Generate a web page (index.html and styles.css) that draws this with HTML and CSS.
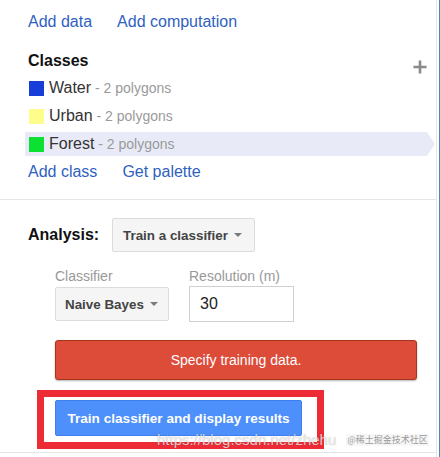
FILE: index.html
```html
<!DOCTYPE html>
<html>
<head>
<meta charset="utf-8">
<link rel="stylesheet" href="styles.css">
</head>
<body>
<div class="page">
  <div class="panel">
    <section class="sec-classes">
      <div class="links">
        <a class="link">Add data</a>
        <a class="link">Add computation</a>
      </div>
      <div class="heading-row">
        <h2 class="heading">Classes</h2>
        <svg class="plus" width="14" height="14" viewBox="0 0 14 14"><path d="M7 0.5V13.5M0.5 7H13.5" stroke="#8a8a8a" stroke-width="2.6" fill="none"/></svg>
      </div>
      <ul class="class-list">
        <li class="class-row"><span class="swatch water"></span><span class="cname">Water</span><span class="cmeta">&nbsp;- 2 polygons</span></li>
        <li class="class-row"><span class="swatch urban"></span><span class="cname">Urban</span><span class="cmeta">&nbsp;- 2 polygons</span></li>
        <li class="class-row selected"><span class="swatch forest"></span><span class="cname">Forest</span><span class="cmeta">&nbsp;- 2 polygons</span></li>
      </ul>
      <div class="links links-bottom">
        <a class="link">Add class</a>
        <a class="link">Get palette</a>
      </div>
    </section>
    <section class="sec-analysis">
      <div class="analysis-row">
        <span class="analysis-label">Analysis:</span>
        <button class="dropdown dd-analysis">Train a classifier<span class="caret"></span></button>
      </div>
      <div class="params">
        <div class="param p-classifier">
          <label class="plabel">Classifier</label>
          <button class="dropdown dd-classifier">Naive Bayes<span class="caret"></span></button>
        </div>
        <div class="param p-res">
          <label class="plabel">Resolution (m)</label>
          <div class="input">30</div>
        </div>
      </div>
      <div class="error">Specify training data.</div>
      <div class="highlight-box">
        <button class="primary">Train classifier and display results</button>
      </div>
    </section>
  </div>
  <div class="edge"></div>
</div>
<div class="watermark"><span class="wm-url">https://blog.csdn.net/zhehu</span><span class="wm-badge">@稀土掘金技术社区</span></div>
</body>
</html>
```
FILE: styles.css
```css
html, body {
  margin: 0;
  padding: 0;
  background: #fff;
}
body {
  width: 440px;
  height: 457px;
  overflow: hidden;
  position: relative;
  font-family: "Liberation Sans", Arial, sans-serif;
  color: #222;
}
.page {
  display: flex;
  height: 457px;
}
.panel {
  width: 436px;
  border-right: 1px solid #e6e6e6;
}
.edge {
  width: 1px;
  margin-left: 2px;
  background: #4a86c8;
}
.sec-classes {
  padding: 13px 9px 18px 28px;
  border-bottom: 1px solid #e5e5e5;
}
.links {
  display: flex;
  gap: 25px;
  font-size: 16px;
  line-height: 18px;
  white-space: nowrap;
}
.link {
  color: #2f5fc2;
  cursor: pointer;
}
.heading-row {
  display: flex;
  justify-content: space-between;
  align-items: flex-start;
  height: 18px;
  margin-top: 21px;
}
.heading {
  margin: 0;
  font-size: 16px;
  line-height: 18px;
  font-weight: bold;
  color: #111;
}
.plus {
  margin-top: 8px;
  flex: none;
}
.class-list {
  list-style: none;
  margin: 6px -8px 0 -3px;
  padding: 0;
}
.class-row {
  display: flex;
  align-items: center;
  height: 24px;
  padding-left: 4px;
  margin-bottom: 4px;
  white-space: nowrap;
}
.class-row.selected {
  background: #e8ebf7;
  clip-path: polygon(0 0, calc(100% - 8px) 0, 100% 50%, calc(100% - 8px) 100%, 0 100%);
}
.swatch {
  width: 15px;
  height: 15px;
  margin-right: 5px;
}
.swatch.water { background: #173ed8; }
.swatch.urban { background: #fdfd8c; }
.swatch.forest { background: #0ce032; }
.cname {
  font-size: 16px;
  color: #333;
}
.cmeta {
  font-size: 14px;
  color: #9a9a9a;
}
.links-bottom {
  margin-top: 7px;
}

.sec-analysis {
  padding: 18px 0 3px 28px;
  border-bottom: 1px solid #e5e5e5;
}
.analysis-row {
  display: flex;
  align-items: center;
}
.analysis-label {
  font-size: 16px;
  font-weight: bold;
  color: #111;
  width: 84px;
}
.dropdown {
  display: flex;
  align-items: center;
  height: 34px;
  box-sizing: border-box;
  border: 1px solid #dcdcdc;
  border-radius: 2px;
  background: #f5f5f5;
  font-family: "Liberation Sans", Arial, sans-serif;
  font-size: 13.4px;
  font-weight: bold;
  color: #444;
  padding: 0 12px 0 10px;
  white-space: nowrap;
}
.caret {
  width: 0;
  height: 0;
  margin-left: 6px;
  border-left: 4px solid transparent;
  border-right: 4px solid transparent;
  border-top: 4px solid #7a7a7a;
}
.params {
  display: flex;
  gap: 20px;
  margin: 16px 0 0 27px;
}
.param {
  display: flex;
  flex-direction: column;
  align-items: flex-start;
}
.p-classifier {
  width: 114px;
}
.plabel {
  font-size: 14px;
  line-height: 16px;
  color: #999;
  height: 18px;
  white-space: nowrap;
}
.dd-classifier {
  width: 114px;
  margin-top: 1px;
  padding: 0 9px 0 9px;
}
.input {
  width: 105px;
  height: 36px;
  box-sizing: border-box;
  border: 1px solid #d0d0d0;
  padding-left: 10px;
  font-size: 16px;
  line-height: 34px;
  color: #222;
}
.error {
  margin: 18px 19px 0 27px;
  height: 40px;
  box-sizing: border-box;
  background: #dd4b39;
  border: 1px solid #a8341f;
  border-radius: 3px;
  box-shadow: 0 1px 2px rgba(0,0,0,0.3);
  color: #fff;
  font-size: 14px;
  line-height: 38px;
  text-align: center;
}
.highlight-box {
  display: inline-block;
  margin: 10px 0 0 9px;
  border: 7px solid #ec2b34;
  padding: 3px 15px 6px 11px;
  vertical-align: top;
}
.primary {
  display: block;
  width: 247px;
  height: 36px;
  box-sizing: border-box;
  background: #4d8ffb;
  border: 1px solid #3d7fee;
  border-radius: 2px;
  color: #fff;
  font-family: "Liberation Sans", Arial, sans-serif;
  font-size: 13.6px;
  font-weight: bold;
  padding: 0;
  white-space: nowrap;
}
.watermark {
  position: absolute;
  left: 157px;
  top: 431px;
  display: flex;
  align-items: center;
  white-space: nowrap;
  pointer-events: none;
}
.wm-url {
  font-size: 15px;
  color: rgba(255,255,255,0.75);
  text-shadow: 0 0 1px rgba(0,0,0,0.35);
}
.wm-badge {
  margin-left: 10px;
  font-family: "Noto Sans CJK SC", sans-serif;
  font-size: 9px;
  line-height: 12px;
  color: #9a9a9a;
  background: rgba(245,245,245,0.8);
  padding: 0 1px;
}
```
